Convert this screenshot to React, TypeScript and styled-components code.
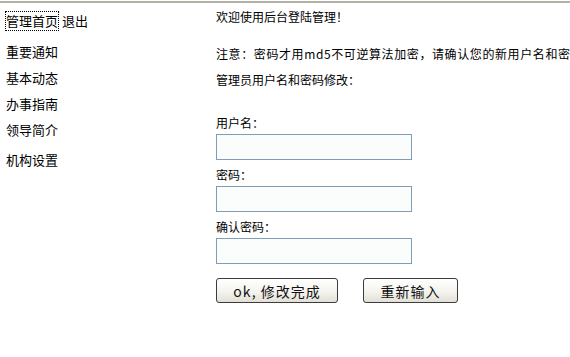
import styled, { createGlobalStyle } from 'styled-components';

const GlobalStyle = createGlobalStyle`
  html, body {
    margin: 0;
    padding: 0;
    background: #fff;
    overflow: hidden;
  }
  body {
    font-family: "Noto Sans CJK SC", "Liberation Sans", sans-serif;
    color: #000;
  }
`;

const Page = styled.div`
  margin-top: 1px;
  border-top: 2px solid #b4b2a6;
  display: flex;
  width: 100%;
  overflow: hidden;
`;

const Sidebar = styled.div`
  width: 216px;
  flex: none;
  box-sizing: border-box;
  padding-left: 6px;
  font-size: 13px;
`;

const TopRow = styled.div`
  padding-top: 9px;
  display: flex;
  align-items: center;
`;

const NavLink = styled.a<{ $focused?: boolean }>`
  display: inline-block;
  line-height: 18px;
  color: #000;
  text-decoration: none;
  outline: ${(p) => (p.$focused ? '1px dotted #000' : 'none')};
  margin-left: ${(p) => (p.$focused ? '0' : '4px')};
`;

const NavList = styled.ul`
  list-style: none;
  margin: 9px 0 0;
  padding: 0;
`;

const NavItem = styled.li<{ $gap?: number }>`
  line-height: 26px;
  margin-top: ${(p) => p.$gap || 0}px;
`;

const Main = styled.div`
  flex: 1;
  min-width: 0;
  font-size: 12px;
  padding-top: 4px;
`;

const Line = styled.p<{ $top: number; $spread?: boolean }>`
  margin: ${(p) => p.$top}px 0 0;
  line-height: 20px;
  white-space: nowrap;
  letter-spacing: ${(p) => (p.$spread ? '0.6px' : '0')};
`;

const Form = styled.form`
  margin-top: 23px;
  display: flex;
  flex-direction: column;
  align-items: flex-start;
`;

const Label = styled.label`
  display: block;
  line-height: 20px;
  margin-bottom: 1px;
`;

const Input = styled.input`
  box-sizing: border-box;
  width: 196px;
  height: 26px;
  margin: 0 0 5px;
  border: 1px solid #7f9db9;
  background: #fbfdfd;
  padding: 2px 4px;
  font-size: 12px;
`;

const Buttons = styled.div`
  display: flex;
  gap: 25px;
  margin-top: 9px;
`;

const Button = styled.button<{ $width: number }>`
  box-sizing: border-box;
  width: ${(p) => p.$width}px;
  height: 25px;
  padding: 0;
  border: 1px solid #3c3c3c;
  border-radius: 3px;
  background: linear-gradient(#ffffff, #f4f3ee 55%, #e2e0d6);
  font-family: "Noto Sans CJK SC", "Liberation Sans", sans-serif;
  font-size: 14px;
  color: #111;
  letter-spacing: 1px;
`;

export default function App() {
  return (
    <>
      <GlobalStyle />
      <Page>
        <Sidebar>
          <TopRow>
            <NavLink href="#" $focused>管理首页</NavLink>
            <NavLink href="#">退出</NavLink>
          </TopRow>
          <NavList>
            <NavItem>重要通知</NavItem>
            <NavItem>基本动态</NavItem>
            <NavItem>办事指南</NavItem>
            <NavItem>领导简介</NavItem>
            <NavItem $gap={4}>机构设置</NavItem>
          </NavList>
        </Sidebar>
        <Main>
          <Line $top={0}>欢迎使用后台登陆管理！</Line>
          <Line $top={17} $spread>注意：密码才用md5不可逆算法加密，请确认您的新用户名和密码！</Line>
          <Line $top={6}>管理员用户名和密码修改：</Line>
          <Form onSubmit={(e) => e.preventDefault()}>
            <Label>用户名：</Label>
            <Input type="text" />
            <Label>密码：</Label>
            <Input type="password" />
            <Label>确认密码：</Label>
            <Input type="password" />
            <Buttons>
              <Button type="submit" $width={122}>ok, 修改完成</Button>
              <Button type="reset" $width={95}>重新输入</Button>
            </Buttons>
          </Form>
        </Main>
      </Page>
    </>
  );
}
